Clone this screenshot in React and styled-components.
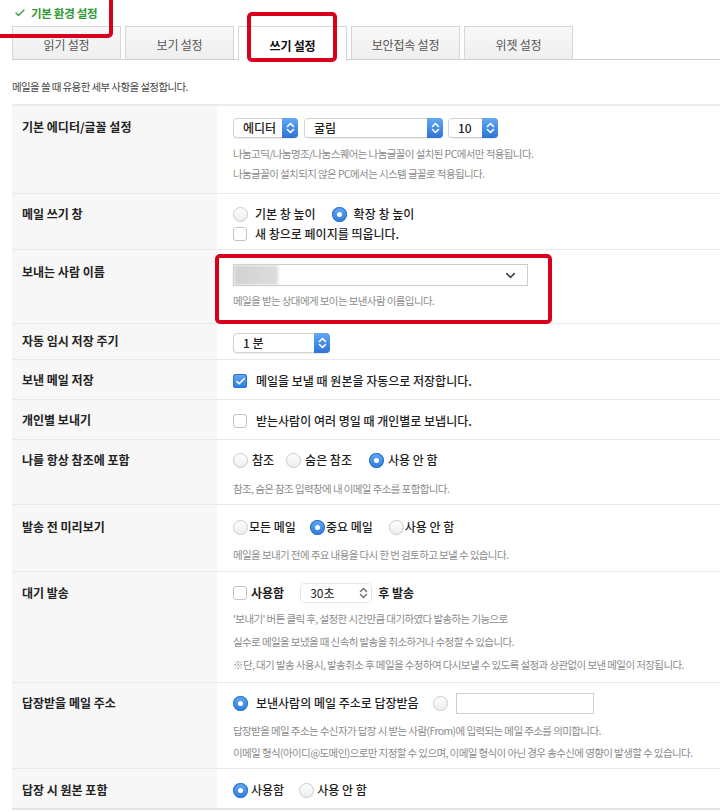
import React from 'react';
import styled, { createGlobalStyle, css } from 'styled-components';
import { Check, ChevronDown } from 'lucide-react';

const GlobalStyle = createGlobalStyle`
  html, body { margin: 0; padding: 0; background: #fff; }
  body { font-family: "Noto Sans CJK KR", "Noto Sans", sans-serif; color: #222; }
  * { box-sizing: border-box; }
`;

const Page = styled.div`
  width: 720px;
  height: 812px;
  overflow: hidden;
  padding-left: 12px;
`;

const Title = styled.div`
  position: relative;
  z-index: 3;
  height: 26px;
  display: flex;
  align-items: center;
  gap: 5px;
  padding-left: 2px;
  font-size: 11.5px;
  font-weight: 700;
  color: #2e9a35;
  letter-spacing: -0.3px;

  &::after {
    content: "";
    position: absolute;
    left: -30px;
    top: -20px;
    width: 123px;
    height: 50px;
    border: 4px solid #d8001c;
    border-radius: 5px;
  }
`;

const Tabs = styled.div`
  display: flex;
  gap: 4px;
  height: 34px;
  border-bottom: 1px solid #cfcfcf;
`;

const Tab = styled.div`
  position: relative;
  width: 109px;
  display: flex;
  align-items: center;
  justify-content: center;
  padding-top: 3px;
  border: 1px solid #d6d6d6;
  border-bottom: none;
  background: linear-gradient(#f8f8f8, #efefef);
  font-size: 12px;
  color: #555;
  letter-spacing: -0.2px;

  ${p => p.$active && css`
    background: #fff;
    height: 35px;
    font-weight: 700;
    color: #111;

    &::after {
      content: "";
      position: absolute;
      top: -15px;
      left: 8px;
      right: 9px;
      bottom: -1px;
      border: 4px solid #d8001c;
      border-radius: 5px;
    }
  `}
`;

const Desc = styled.p`
  margin: 18px 0 8px;
  line-height: 18px;
  font-size: 10.5px;
  letter-spacing: -0.6px;
  color: #444;
`;

const Table = styled.div`
  border-top: 2px solid #ececec;
`;

const Row = styled.div`
  display: grid;
  grid-template-columns: 205px 1fr;
  border-bottom: 1px solid #e9e9e9;

  &:last-child {
    border-bottom: 2px solid #e6e6e6;
  }
`;

const Label = styled.div`
  background: #f7f7f7;
  padding: ${p => p.$pt ?? 11}px 10px 8px;
  font-size: 12px;
  font-weight: 700;
  line-height: 20px;
  color: #222;
`;

const Value = styled.div`
  position: relative;
  padding: ${p => p.$pt ?? 11}px 0 ${p => p.$pb ?? 8}px 16px;
  font-size: 12px;
  line-height: 20px;
  color: #1e1e1e;

  ${p => p.$marked && css`
    &::after {
      content: "";
      position: absolute;
      top: 4px;
      left: -2px;
      right: 168px;
      bottom: -1px;
      border: 4px solid #d8001c;
      border-radius: 5px;
    }
  `}
`;

const Line = styled.div`
  display: flex;
  align-items: center;
  height: ${p => p.$h ?? 20}px;
`;

const Option = styled.label`
  display: inline-flex;
  align-items: center;
  gap: ${p => p.$gap ?? 7}px;
  margin-right: ${p => p.$mr ?? 0}px;
  font-weight: ${p => (p.$bold ? 700 : 500)};
  white-space: nowrap;
`;

const Radio = styled.span`
  position: relative;
  width: 15px;
  height: 15px;
  border-radius: 50%;
  flex-shrink: 0;

  ${p => p.$on
    ? css`
      background: linear-gradient(#63aaf4, #2f7ddb);
      box-shadow: inset 0 0 0 1px #2c74cf;
      &::after {
        content: "";
        position: absolute;
        width: 5px;
        height: 5px;
        left: 5px;
        top: 5px;
        border-radius: 50%;
        background: #fff;
      }
    `
    : css`
      background: linear-gradient(#fff, #ededed);
      border: 1px solid #cbcbcb;
    `}
`;

const Box = styled.span`
  width: 14px;
  height: 14px;
  border-radius: 3px;
  flex-shrink: 0;
  display: flex;
  align-items: center;
  justify-content: center;

  ${p => p.$on
    ? css`
      background: linear-gradient(#63aaf4, #2f7ddb);
      box-shadow: inset 0 0 0 1px #2c74cf;
    `
    : css`
      background: #fff;
      border: 1px solid #c4c4c4;
    `}
`;

const Select = styled.div`
  display: inline-flex;
  align-items: center;
  justify-content: space-between;
  width: ${p => p.$w}px;
  height: ${p => p.$h ?? 20}px;
  margin-right: ${p => p.$mr ?? 0}px;
  margin-left: ${p => p.$ml ?? 0}px;
  padding-left: 9px;
  border: 1px solid ${p => (p.$plain ? '#e6e6e6' : '#d2d2d2')};
  border-radius: 4px;
  background: #fff;
  box-shadow: ${p => (p.$plain ? 'none' : '0 1px 1px rgba(0,0,0,0.08)')};
  font-size: 12px;
  font-weight: ${p => (p.$plain ? 400 : 500)};
  color: #222;
`;

const Stepper = styled.span`
  width: 16px;
  height: calc(100% + 2px);
  margin-right: -1px;
  border-radius: 0 4px 4px 0;
  background: linear-gradient(#63a9f3, #2b74d6);
  display: flex;
  align-items: center;
  justify-content: center;
`;

const PlainStepper = styled.span`
  width: 16px;
  display: flex;
  align-items: center;
  justify-content: center;
`;

const Help = styled.div`
  margin-top: ${p => p.$mt ?? 6}px;
  font-size: 10.5px;
  letter-spacing: -0.6px;
  line-height: ${p => p.$lh ?? 20}px;
  color: #8c8c8c;
`;

const NameInput = styled.div`
  width: 295px;
  height: 22px;
  border: 1px solid #cdcdcd;
  display: flex;
  align-items: center;
  justify-content: space-between;
  padding-right: 9px;
`;

const Blur = styled.span`
  width: 44px;
  height: 20px;
  background: linear-gradient(90deg, #d2d2d2, #dcdcdc);
  filter: blur(1.5px);
`;

const TextInput = styled.div`
  width: 138px;
  height: 21px;
  border: 1px solid #cfcfcf;
  background: #fff;
`;

const Word = styled.span`
  font-weight: 700;
  margin-left: ${p => p.$ml ?? 0}px;
`;

const Arrows = ({ color = '#fff' }) => (
  <svg width="9" height="12" viewBox="0 0 9 12" fill="none" stroke={color} strokeWidth="1.6" strokeLinecap="round" strokeLinejoin="round">
    <path d="M1.5 4.5 L4.5 1.5 L7.5 4.5" />
    <path d="M1.5 7.5 L4.5 10.5 L7.5 7.5" />
  </svg>
);

const MacSelect = ({ w, children, mr, h }) => (
  <Select $w={w} $mr={mr} $h={h}>
    <span>{children}</span>
    <Stepper><Arrows /></Stepper>
  </Select>
);

const RadioOpt = ({ on, gap, mr, children }) => (
  <Option $gap={gap} $mr={mr}>
    <Radio $on={on} />
    {children}
  </Option>
);

const CheckOpt = ({ on, gap, mr, bold, children }) => (
  <Option $gap={gap} $mr={mr} $bold={bold}>
    <Box $on={on}>{on && <Check size={11} color="#fff" strokeWidth={3.5} />}</Box>
    {children}
  </Option>
);

export default function App() {
  return (
    <Page>
      <GlobalStyle />
      <Title>
        <Check size={12} strokeWidth={2.6} color="#2e9a35" />
        기본 환경 설정
      </Title>

      <Tabs>
        <Tab>읽기 설정</Tab>
        <Tab>보기 설정</Tab>
        <Tab $active>쓰기 설정</Tab>
        <Tab>보안접속 설정</Tab>
        <Tab>위젯 설정</Tab>
      </Tabs>

      <Desc>메일을 쓸 때 유용한 세부 사항을 설정합니다.</Desc>

      <Table>
        <Row>
          <Label $pt={11}>기본 에디터/글꼴 설정</Label>
          <Value $pt={12} $pb={9}>
            <Line>
              <MacSelect w={65} mr={6}>에디터</MacSelect>
              <MacSelect w={139} mr={5}>굴림</MacSelect>
              <MacSelect w={50}>10</MacSelect>
            </Line>
            <Help>
              나눔고딕/나눔명조/나눔스퀘어는 나눔글꼴이 설치된 PC에서만 적용됩니다.<br />
              나눔글꼴이 설치되지 않은 PC에서는 시스템 글꼴로 적용됩니다.
            </Help>
          </Value>
        </Row>

        <Row>
          <Label $pt={10}>메일 쓰기 창</Label>
          <Value $pt={10} $pb={5}>
            <Line>
              <RadioOpt gap={7} mr={16}>기본 창 높이</RadioOpt>
              <RadioOpt on gap={7}>확장 창 높이</RadioOpt>
            </Line>
            <Line>
              <CheckOpt gap={8}>새 창으로 페이지를 띄웁니다.</CheckOpt>
            </Line>
          </Value>
        </Row>

        <Row>
          <Label $pt={12}>보내는 사람 이름</Label>
          <Value $pt={14} $pb={12} $marked>
            <NameInput>
              <Blur />
              <ChevronDown size={15} strokeWidth={2.6} color="#444" />
            </NameInput>
            <Help $mt={5}>메일을 받는 상대에게 보이는 보낸사람 이름입니다.</Help>
          </Value>
        </Row>

        <Row>
          <Label $pt={7}>자동 임시 저장 주기</Label>
          <Value $pt={9} $pb={6}>
            <Line>
              <MacSelect w={97}>1 분</MacSelect>
            </Line>
          </Value>
        </Row>

        <Row>
          <Label $pt={10}>보낸 메일 저장</Label>
          <Value $pt={11} $pb={8}>
            <Line>
              <CheckOpt on gap={9}>메일을 보낼 때 원본을 자동으로 저장합니다.</CheckOpt>
            </Line>
          </Value>
        </Row>

        <Row>
          <Label $pt={10}>개인별 보내기</Label>
          <Value $pt={11} $pb={8}>
            <Line>
              <CheckOpt gap={9}>받는사람이 여러 명일 때 개인별로 보냅니다.</CheckOpt>
            </Line>
          </Value>
        </Row>

        <Row>
          <Label $pt={10}>나를 항상 참조에 포함</Label>
          <Value $pt={10} $pb={5}>
            <Line>
              <RadioOpt gap={4} mr={12}>참조</RadioOpt>
              <RadioOpt gap={4} mr={17}>숨은 참조</RadioOpt>
              <RadioOpt on gap={4}>사용 안 함</RadioOpt>
            </Line>
            <Help $mt={9}>참조, 숨은 참조 입력창에 내 이메일 주소를 포함합니다.</Help>
          </Value>
        </Row>

        <Row>
          <Label $pt={12}>발송 전 미리보기</Label>
          <Value $pt={12} $pb={6}>
            <Line>
              <RadioOpt gap={1} mr={14}>모든 메일</RadioOpt>
              <RadioOpt on gap={1} mr={16}>중요 메일</RadioOpt>
              <RadioOpt gap={1}>사용 안 함</RadioOpt>
            </Line>
            <Help $mt={8}>메일을 보내기 전에 주요 내용을 다시 한 번 검토하고 보낼 수 있습니다.</Help>
          </Value>
        </Row>

        <Row>
          <Label $pt={11}>대기 발송</Label>
          <Value $pt={11} $pb={6}>
            <Line>
              <CheckOpt gap={4} bold>사용함</CheckOpt>
              <Select $w={72} $ml={16} $plain>
                <span>30초</span>
                <PlainStepper><Arrows color="#777" /></PlainStepper>
              </Select>
              <Word $ml={6}>후 발송</Word>
            </Line>
            <Help $mt={4} $lh={23}>
              '보내기' 버튼 클릭 후, 설정한 시간만큼 대기하였다 발송하는 기능으로<br />
              실수로 메일을 보냈을 때 신속히 발송을 취소하거나 수정할 수 있습니다.<br />
              ※단, 대기 발송 사용시, 발송취소 후 메일을 수정하여 다시보낼 수 있도록 설정과 상관없이 보낸 메일이 저장됩니다.
            </Help>
          </Value>
        </Row>

        <Row>
          <Label $pt={10}>답장받을 메일 주소</Label>
          <Value $pt={10} $pb={4}>
            <Line>
              <RadioOpt on gap={8} mr={14}>보낸사람의 메일 주소로 답장받음</RadioOpt>
              <RadioOpt gap={8}>
                <TextInput />
              </RadioOpt>
            </Line>
            <Help $mt={7} $lh={22}>
              답장받을 메일 주소는 수신자가 답장 시 받는 사람(From)에 입력되는 메일 주소를 의미합니다.<br />
              이메일 형식(아이디@도메인)으로만 지정할 수 있으며, 이메일 형식이 아닌 경우 송수신에 영향이 발생할 수 있습니다.
            </Help>
          </Value>
        </Row>

        <Row>
          <Label $pt={11}>답장 시 원본 포함</Label>
          <Value $pt={11} $pb={7}>
            <Line>
              <RadioOpt on gap={3} mr={15}>사용함</RadioOpt>
              <RadioOpt gap={3}>사용 안 함</RadioOpt>
            </Line>
          </Value>
        </Row>
      </Table>
    </Page>
  );
}
